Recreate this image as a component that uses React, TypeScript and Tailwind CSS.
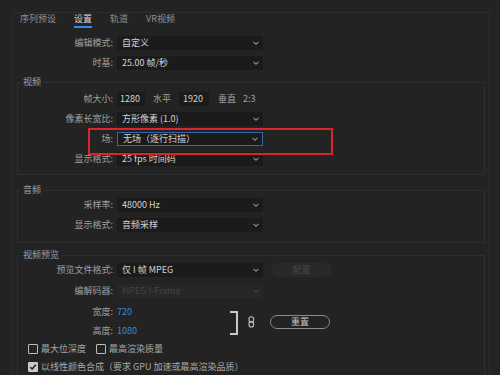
import React from 'react';

const Chevron: React.FC<{ dim?: boolean }> = ({ dim }) => (
  <svg width="8" height="8" viewBox="0 0 8 8" className="shrink-0">
    <path d="M1.5 2.8 L4 5.2 L6.5 2.8" fill="none" stroke={dim ? '#3e3e3e' : '#8a8a8a'} strokeWidth="1.1" />
  </svg>
);

const Label: React.FC<{ text: string; w: string }> = ({ text, w }) => (
  <div className={`${w} shrink-0 pr-[4px] text-right text-[#a0a0a0]`}>{text}</div>
);

const Select: React.FC<{ value: string; active?: boolean; disabled?: boolean }> = ({ value, active, disabled }) => (
  <div
    className={`flex h-[14px] w-[146px] items-center justify-between pl-[5px] pr-[3px] ${
      disabled ? 'bg-[#272727] text-[#444444]' : 'bg-[#1b1b1b] text-[#d2d2d2]'
    } ${active ? 'border border-[#2f69ad]' : ''}`}
  >
    <span>{value}</span>
    <Chevron dim={disabled} />
  </div>
);

const Row: React.FC<{ label: string; inset?: boolean; h?: string; children: React.ReactNode }> = ({
  label,
  inset,
  h,
  children,
}) => (
  <div className={`flex ${h ?? 'h-[20px]'} items-center`}>
    <Label text={label} w={inset ? 'w-[99px]' : 'w-[104px]'} />
    {children}
  </div>
);

const Box: React.FC<{ checked?: boolean }> = ({ checked }) =>
  checked ? (
    <div className="flex h-[10px] w-[10px] items-center justify-center rounded-[1px] bg-[#c9c9c9]">
      <svg width="8" height="8" viewBox="0 0 8 8">
        <path d="M1.3 4.2 L3.2 6 L6.8 1.8" fill="none" stroke="#1e1e1e" strokeWidth="1.5" />
      </svg>
    </div>
  ) : (
    <div className="h-[10px] w-[10px] rounded-[1px] border border-[#bdbdbd]" />
  );

const Section: React.FC<{ title: string; className?: string; children: React.ReactNode }> = ({ title, className, children }) => (
  <fieldset className={`mx-[4px] border border-[#2f2f2f] ${className ?? ''}`}>
    <legend className="ml-[2px] px-[3px] leading-[10px] text-[#a0a0a0]">{title}</legend>
    {children}
  </fieldset>
);

export default function App() {
  const tabs = ['序列预设', '设置', '轨道', 'VR视频'];
  return (
    <div
      className="relative h-[375px] w-[500px] overflow-hidden bg-[#232323] pl-[12px] pr-[10px] pt-[12px] text-[9px] leading-[12px]"
      style={{ fontFamily: '"Noto Sans CJK SC", "Noto Sans", sans-serif' }}
    >
      <div className="h-[400px] border border-b-0 border-[#2d2d2d]">
        {/* tabs */}
        <div className="flex gap-[18px] pl-[7px]">
          {tabs.map((t, i) => (
            <div key={t} className="flex flex-col">
              <span className={`leading-[12px] ${i === 1 ? 'text-[#d4d4d4]' : 'text-[#909090]'}`}>{t}</span>
              <div className={`mt-[1px] h-[2px] ${i === 1 ? 'bg-[#2d8ceb]' : ''}`} />
            </div>
          ))}
        </div>

        <div className="mt-[5px]">
          <Row label="编辑模式:">
            <Select value="自定义" />
          </Row>
          <Row label="时基:">
            <Select value="25.00  帧/秒" />
          </Row>
        </div>

        <Section title="视频" className="mt-[4px] pb-[5px] pt-[2px]">
          <Row label="帧大小:" inset>
            <div className="flex h-[14px] w-[28px] items-center bg-[#1b1b1b] pl-[3px] text-[#d2d2d2]">1280</div>
            <span className="ml-[8px] text-[#a0a0a0]">水平</span>
            <div className="ml-[8px] flex h-[14px] w-[30px] items-center bg-[#1b1b1b] pl-[4px] text-[#d2d2d2]">1920</div>
            <span className="ml-[9px] text-[#a0a0a0]">垂直</span>
            <span className="ml-[7px] text-[#a0a0a0]">2:3</span>
          </Row>
          <Row label="像素长宽比:" inset>
            <Select value="方形像素 (1.0)" />
          </Row>
          <Row label="场:" inset>
            <Select value="无场（逐行扫描）" active />
          </Row>
          <Row label="显示格式:" inset>
            <Select value="25 fps 时间码" />
          </Row>
        </Section>

        <Section title="音频" className="mt-[10px] pb-[7px]">
          <Row label="采样率:" inset>
            <Select value="48000 Hz" />
          </Row>
          <Row label="显示格式:" inset>
            <Select value="音频采样" />
          </Row>
        </Section>

        <Section title="视频预览" className="mt-[7px]">
          <Row label="预览文件格式:" inset>
            <Select value="仅 I 帧 MPEG" />
            <div className="ml-[8px] flex h-[14px] w-[61px] items-center justify-center rounded-full bg-[#292929] text-[#474747]">
              配置
            </div>
          </Row>
          <Row label="编解码器:" inset h="h-[22px]">
            <Select value="MPEG I-Frame" disabled />
          </Row>
          <div className="flex items-center">
            <div className="flex w-[212px] flex-col">
              <Row label="宽度:" inset>
                <span className="text-[#3f86d6]">720</span>
              </Row>
              <Row label="高度:" inset h="h-[18px]">
                <span className="text-[#3f86d6]">1080</span>
              </Row>
            </div>
            <div className="mt-[3px] h-[24px] w-[8px] border-y-2 border-r-2 border-[#c8c8c8]" />
            <svg width="7" height="12" viewBox="0 0 7 12" className="ml-[10px] mt-[1px]">
              <rect x="1" y="0.8" width="4.6" height="5.4" rx="2.3" fill="none" stroke="#bdbdbd" strokeWidth="1.1" />
              <rect x="1" y="5.6" width="4.6" height="5.4" rx="2.3" fill="none" stroke="#bdbdbd" strokeWidth="1.1" />
            </svg>
            <div className="ml-[15px] mt-[1px] flex h-[14px] w-[60px] items-center justify-center rounded-full border border-[#8a8a8a] text-[#c4c4c4]">
              重置
            </div>
          </div>
          <div className="flex h-[18px] items-center pl-[10px] text-[#a8a8a8]">
            <Box />
            <span className="ml-[3px]">最大位深度</span>
            <div className="ml-[10px]">
              <Box />
            </div>
            <span className="ml-[3px]">最高渲染质量</span>
          </div>
          <div className="flex h-[18px] items-center pl-[10px] text-[#a8a8a8]">
            <Box checked />
            <span className="ml-[3px]">以线性颜色合成（要求 GPU 加速或最高渲染品质）</span>
          </div>
        </Section>
      </div>

      {/* annotation highlight */}
      <div className="pointer-events-none absolute left-[88px] top-[128px] h-[27px] w-[245px] border-2 border-[#d8262c]" />
    </div>
  );
}
